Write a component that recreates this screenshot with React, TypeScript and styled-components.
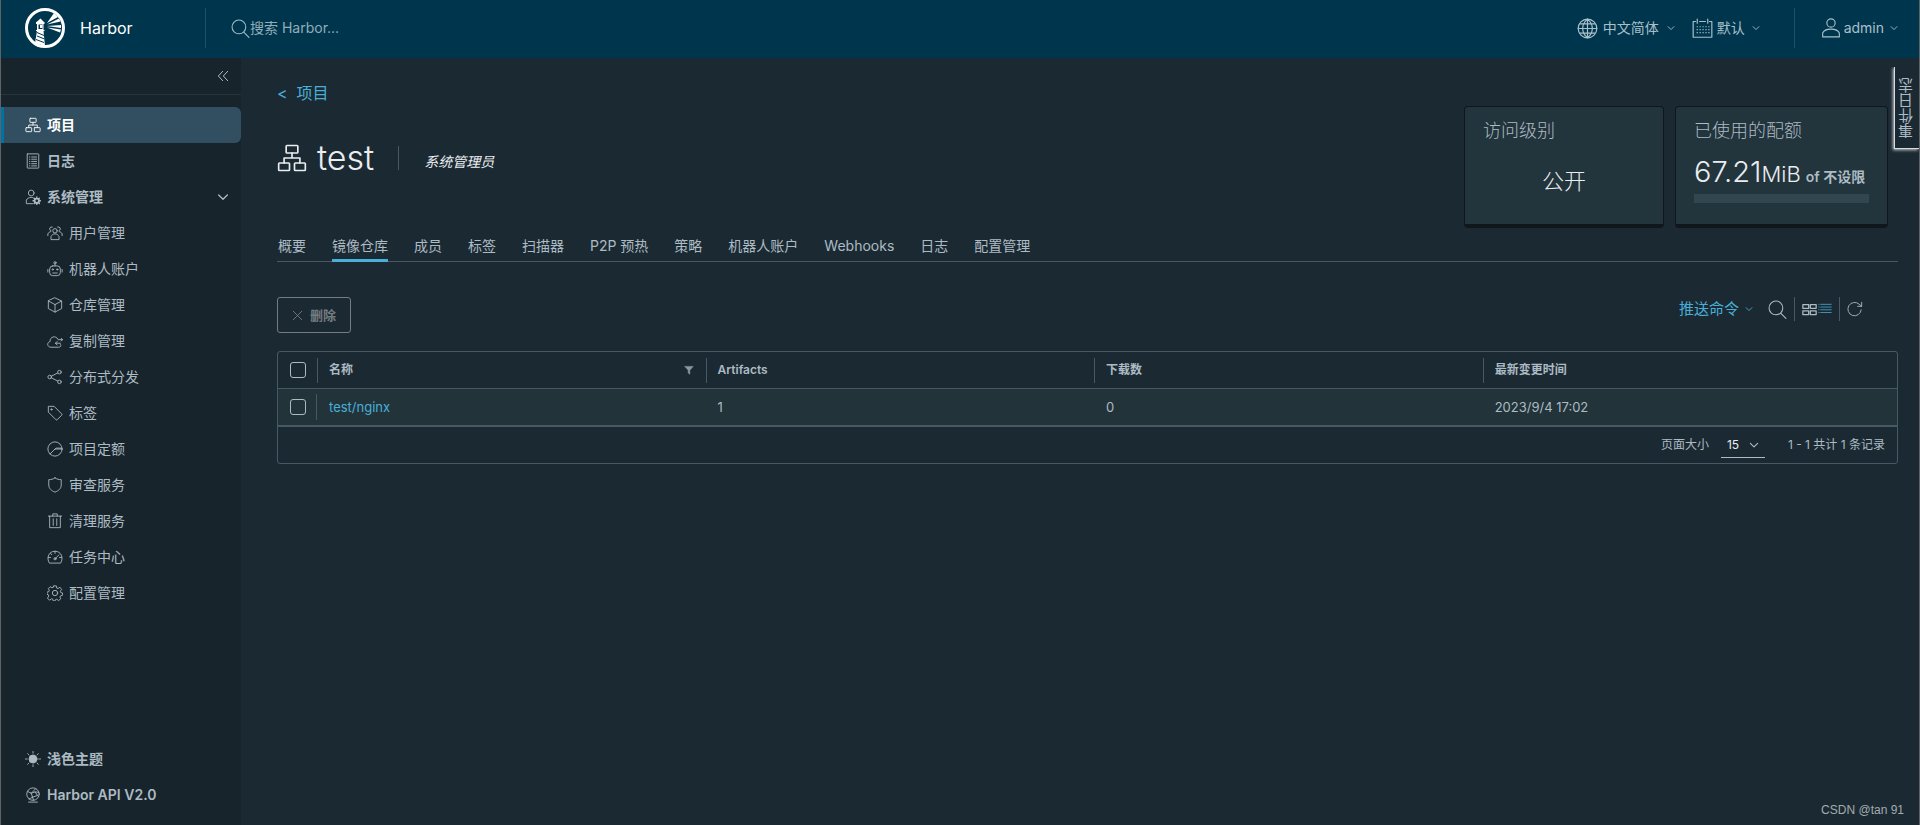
import React from "react";
import styled, { createGlobalStyle, css } from "styled-components";

const c = {
  header: "#00364d",
  side: "#17242b",
  main: "#1b2a32",
  active: "#324f62",
  panel: "#22343c",
  line: "#495865",
  text: "#adbbc4",
  bright: "#eaedf0",
  link: "#49afd9",
  edge: "#5c6265",
};

const Global = createGlobalStyle`
  *, *::before, *::after { box-sizing: border-box; }
  body {
    margin: 0;
    background: ${c.main};
    color: ${c.text};
    font: 400 14px/24px Inter, "Noto Sans CJK SC", sans-serif;
  }
  button, input, select { font: inherit; color: inherit; }
  button { background: none; border: 0; padding: 0; cursor: pointer; }
  a { color: inherit; text-decoration: none; }
`;

/* ---------- icons, all on a 36 unit grid ---------- */

const Svg = styled.svg<{ $s: number; $w?: number }>`
  display: block;
  flex: none;
  width: ${(p) => p.$s}px;
  height: ${(p) => p.$s}px;
  fill: none;
  stroke: currentColor;
  stroke-width: ${(p) => p.$w ?? 2};
  stroke-linecap: round;
  stroke-linejoin: round;
`;

const shapes: Record<string, React.ReactNode> = {
  org: (
    <>
      <rect x="11" y="3" width="14" height="9" rx="1" />
      <rect x="2" y="24" width="13" height="9" rx="1" />
      <rect x="21" y="24" width="13" height="9" rx="1" />
      <path d="M18 12v6M8.500 24v-6h19v6" />
    </>
  ),
  log: (
    <>
      <rect x="5" y="2" width="26" height="32" rx="1" />
      <path d="M10 9h1M15 9h11M10 14h1M15 14h11M10 19h1M15 19h11M10 24h1M15 24h11M10 29h1M15 29h11" />
    </>
  ),
  admin: (
    <>
      <circle cx="14" cy="9" r="6.500" />
      <path d="M17 33H3v-8c2-4 6-6 11-6 2 0 4 0 5 1" />
      <circle cx="26.500" cy="26.500" r="5" strokeWidth="4" />
      <path d="M26.500 18v3M26.500 32v3M18 26.500h3M32 26.500h3M20.500 20.500l2 2M30.500 30.500l2 2M32.500 20.500l-2 2M22.500 30.500l-2 2" strokeWidth="3" />
    </>
  ),
  users: (
    <>
      <circle cx="18" cy="13" r="5" />
      <path d="M9 32v-6c2-4 5-6 9-6s7 2 9 6v6zM12 4.500A4.500 4.500 0 1 0 9 13M24 4.500A4.500 4.500 0 1 1 27 13M2 24v-4c1-3 3-4 6-5M34 24v-4c-1-3-3-4-6-5" />
    </>
  ),
  robot: (
    <>
      <rect x="6" y="11" width="24" height="22" rx="7" />
      <circle cx="18" cy="4" r="2.500" />
      <path d="M18 7v4M2 19v6M34 19v6M13 27h10" />
      <circle cx="13" cy="19" r="1.500" />
      <circle cx="23" cy="19" r="1.500" />
    </>
  ),
  cube: <path d="M18 2l15 7v17l-15 8-15-8V9zM3 9l15 8 15-8M18 17v17" />,
  cloud: (
    <path d="M30 25c3 3 1 7-4 7H9C0 32-1 21 7 19 6 8 20 5 24 13M25 15h10M32 12l3 3-3 3M30 23H19M23 19l-4 4 4 4" />
  ),
  share: (
    <>
      <circle cx="6" cy="18" r="4" />
      <circle cx="28" cy="7" r="4" />
      <circle cx="28" cy="29" r="4" />
      <path d="M10 16l14-7M10 20l14 7" />
    </>
  ),
  tag: (
    <>
      <path d="M3 4v12l17 17c1 1 2 1 3 0l10-10c1-1 1-2 0-3L16 3H4z" />
      <circle cx="10" cy="10" r="1.500" />
    </>
  ),
  quota: (
    <>
      <circle cx="18" cy="18" r="16" />
      <path d="M7 29l11-11h16M18 18l3-2h12" />
    </>
  ),
  shield: <path d="M18 2c4 3 9 4 14 4v12c0 8-6 13-14 16C10 31 4 26 4 18V6c5 0 10-1 14-4z" />,
  trash: <path d="M3 7h30M13 7V2h10v5M6 7v26h24V7M14 13v15M22 13v15" />,
  gauge: (
    <>
      <path d="M5 31C-2 20 4 5 18 5s20 15 13 26zM18 5v5M3 19h5M28 19h5M8 10l3 3M18 22l9-9" />
      <circle cx="18" cy="22" r="2.500" />
    </>
  ),
  gear: (
    <>
      <circle cx="18" cy="18" r="6" />
      <path d="M15 2h6l1 5 3 1 4-3 4 5-3 4 1 3 4 1v5l-4 1-2 3 2 4-5 4-4-3-3 1-1 3h-4l-1-4-3-1-4 3-5-4 3-5-1-3-3-1v-5l4-1 1-3-2-4 4-4 4 2 3-1z" />
    </>
  ),
  sun: (
    <>
      <circle cx="18" cy="18" r="9" fill="currentColor" />
      <path d="M18 1v4M18 31v4M1 18h4M31 18h4M6 6l3 3M27 27l3 3M30 6l-3 3M9 27l-3 3" />
    </>
  ),
  api: (
    <>
      <circle cx="18" cy="16" r="14" />
      <path d="M8 34h20M6 10l8 4 10-10M14 14l3 9-8 4M17 23l11-4-5-8M28 19l3 3M14 14l9-3 8 1M17 23l2 6" />
    </>
  ),
  search: (
    <>
      <circle cx="15" cy="15" r="13" />
      <path d="M24 25l10 10" />
    </>
  ),
  globe: (
    <>
      <circle cx="18" cy="18" r="16" />
      <path d="M18 2v32M2 18h32M5 10h26M5 26h26M18 2c-11 9-11 23 0 32M18 2c11 9 11 23 0 32" />
    </>
  ),
  calendar: (
    <>
      <path d="M6 6H2v27h32V6h-4M13 6h10M9 2v7M27 2v7" />
      <path d="M8 15h2M13 15h2M18 15h2M23 15h2M28 15h2M8 20h2M13 20h2M18 20h2M23 20h2M28 20h2M8 25h2M13 25h2M18 25h2M23 25h2M28 25h2" strokeLinecap="butt" />
    </>
  ),
  user: (
    <>
      <circle cx="18" cy="9" r="7.500" />
      <path d="M3 34v-7c2-5 9-7 15-7s13 2 15 7v7z" />
    </>
  ),
  down: <path d="M5 12l13 13 13-13" />,
  collapse: <path d="M17 4L4 18l13 14M32 4L19 18l13 14" />,
  close: <path d="M4 4l28 28M32 4L4 32" />,
  filter: <path d="M3 5h30L21 19v14l-6-4V19z" fill="currentColor" />,
  cards: <path d="M2 6h14v9H2zM20 6h14v9H20zM2 21h14v9H2zM20 21h14v9H20z" />,
  list: <path d="M2 6h1M7 6h27M2 13h1M7 13h27M2 20h1M7 20h27M2 27h1M7 27h27" />,
  refresh: <path d="M32 20A15 15 0 1 1 27 7l6 5M33 3v9h-9" />,
};

function Icon({ name, size, w }: { name: string; size: number; w?: number }) {
  return (
    <Svg viewBox="0 0 36 36" $s={size} $w={w} aria-hidden="true">
      {shapes[name]}
    </Svg>
  );
}

function Logo() {
  return (
    <svg width="40" height="40" viewBox="0 0 40 40" aria-hidden="true">
      <circle cx="20" cy="20" r="18.500" fill="none" stroke="#fff" strokeWidth="3" />
      <path d="M15.500 10.500l3.500 3.500h.5v2h-1v6h1v1h-1l1.500 15-10-3 2-12h-1v-1h1v-6h-1v-2h.5z" fill="#fff" />
      <path d="M13.500 16.500h4v4.500h-4z" fill={c.header} />
      <path d="M15 17h2.500v3H15z" fill="#fff" />
      <path d="M12 24.500l7 3M12 28l7.500 3M11 31.500l8 3" stroke={c.header} strokeWidth="1" />
      <path d="M22 15l7-10 4 4zM22 16.500l12-6 1.500 3zM22 18l14-1v3zM22 19.500l14 2-1 3z" fill="#fff" />
    </svg>
  );
}

/* ---------- frame ---------- */

const Frame = styled.div`
  position: relative;
  display: flex;
  flex-direction: column;
  min-height: 100vh;
  border: solid ${c.edge};
  border-width: 0 1px;
`;

const Header = styled.header`
  display: flex;
  align-items: center;
  height: 58px;
  padding: 0 21px 2px 24px;
  background: ${c.header};
`;

const Brand = styled.a`
  display: flex;
  align-items: center;
  gap: 15px;
  width: 180px;
  color: #fff;
  font-size: 16px;
`;

const Rule = styled.span<{ $h: number }>`
  flex: none;
  width: 1px;
  height: ${(p) => p.$h}px;
  background: ${c.line};
`;

const HeaderRule = styled(Rule)`
  background: #1f5066;
`;

const Search = styled.label`
  display: flex;
  flex: 1;
  align-items: center;
  padding-left: 25px;
  color: #a3bcc8;
`;

const SearchInput = styled.input`
  flex: 1;
  min-width: 0;
  padding: 0;
  border: 0;
  outline: 0;
  background: none;
  &::placeholder { color: #93adb9; opacity: 1; }
`;

const MenuButton = styled.button<{ $gap: number }>`
  display: flex;
  align-items: center;
  gap: ${(p) => p.$gap}px;
  color: #a9c0cb;
  svg:last-child { margin-left: 3px; }
`;

const HeaderMenus = styled.div`
  display: flex;
  align-items: center;
  gap: 17px;
  margin-right: 34px;
`;

const UserMenu = styled.div`
  padding-left: 26px;
`;

const Body = styled.div`
  display: flex;
  flex: 1;
`;

/* ---------- side navigation ---------- */

const Side = styled.aside`
  display: flex;
  flex: none;
  flex-direction: column;
  width: 240px;
  padding-bottom: 12px;
  background: ${c.side};
`;

const CollapseRow = styled.div`
  display: flex;
  align-items: center;
  justify-content: flex-end;
  height: 37px;
  padding-right: 12px;
  border-bottom: 1px solid #25343d;
`;

const NavList = styled.nav`
  display: flex;
  flex: 1;
  flex-direction: column;
  padding-top: 12px;
`;

const NavItem = styled.a<{ $active?: boolean; $sub?: boolean }>`
  display: flex;
  align-items: center;
  gap: 6px;
  height: 36px;
  padding: 0 12px 0 ${(p) => (p.$sub ? 46 : 24)}px;
  font-weight: ${(p) => (p.$sub ? 400 : 600)};
  ${(p) =>
    p.$active &&
    css`
      border-radius: 0 6px 6px 0;
      background: ${c.active};
      box-shadow: inset 3px 0 #0072a3;
      color: #fff;
    `}
`;

const Grow = styled.span`
  flex: 1;
`;

const subItems = [
  ["users", "用户管理"],
  ["robot", "机器人账户"],
  ["cube", "仓库管理"],
  ["cloud", "复制管理"],
  ["share", "分布式分发"],
  ["tag", "标签"],
  ["quota", "项目定额"],
  ["shield", "审查服务"],
  ["trash", "清理服务"],
  ["gauge", "任务中心"],
  ["gear", "配置管理"],
];

/* ---------- main ---------- */

const Main = styled.main`
  flex: 1;
  min-width: 0;
  padding: 23px 21px 40px 36px;
`;

const Top = styled.div`
  display: flex;
  justify-content: space-between;
  align-items: flex-start;
`;

const Crumb = styled.a`
  display: flex;
  gap: 9px;
  color: ${c.link};
  font-size: 16px;
`;

const TitleRow = styled.div`
  display: flex;
  align-items: center;
  margin-top: 33px;
  color: ${c.bright};
`;

const Title = styled.h1`
  margin: 0 24px 0 10px;
  font-size: 34px;
  font-weight: 300;
  line-height: 40px;
`;

const Role = styled.em`
  padding: 7px 0 0 25px;
`;

const Cards = styled.div`
  display: flex;
  gap: 11px;
  margin: 25px 10px 0 0;
`;

const Card = styled.section<{ $w: number }>`
  width: ${(p) => p.$w}px;
  height: 122px;
  padding: 12px 18px;
  border: 1px solid #0f171c;
  border-bottom-width: 4px;
  border-radius: 4px;
  background: ${c.panel};
`;

const CardTitle = styled.h2`
  margin: 0;
  font-size: 18px;
  font-weight: 300;
`;

const Access = styled.p`
  margin: 22px 0 0;
  color: ${c.bright};
  font-size: 22px;
  font-weight: 300;
  line-height: 32px;
  text-align: center;
`;

const Quota = styled.p`
  display: flex;
  align-items: baseline;
  margin: 12px 0 0;
  color: ${c.bright};
  font-size: 29px;
  font-weight: 300;
  line-height: 34px;
  white-space: nowrap;
`;

const Unit = styled.span`
  font-size: 22px;
`;

const Limit = styled.span`
  margin-left: 5px;
  color: ${c.text};
  font-size: 14px;
  font-weight: 600;
`;

const Bar = styled.div`
  height: 9px;
  background: #324650;
`;

const Tabs = styled.nav`
  display: flex;
  gap: 26px;
  height: 32px;
  margin-top: 2px;
  padding-left: 1px;
  box-shadow: inset 0 -1px ${c.line};
`;

const Tab = styled.a<{ $active?: boolean }>`
  line-height: 32px;
  ${(p) => p.$active && css`box-shadow: inset 0 -3px ${c.link};`}
`;

const Toolbar = styled.div`
  display: flex;
  align-items: flex-start;
  justify-content: space-between;
  margin-top: 35px;
`;

const DeleteButton = styled.button`
  display: flex;
  align-items: center;
  justify-content: center;
  gap: 7px;
  width: 74px;
  height: 36px;
  border: 1px solid #737c81;
  border-radius: 3px;
  color: #737c81;
  font-size: 13px;
  font-weight: 600;
`;

const Tools = styled.div`
  display: flex;
  align-items: center;
  gap: 7px;
  height: 24px;
  padding-right: 35px;
`;

const PushButton = styled.button`
  display: flex;
  align-items: center;
  gap: 6px;
  margin-right: 8px;
  color: ${c.link};
  font-size: 15px;
`;

const IconButton = styled.button<{ $on?: boolean }>`
  color: ${(p) => (p.$on ? c.link : c.text)};
`;

const ViewSwitch = styled.div`
  display: flex;
  align-items: center;
  gap: 1px;
`;

const Grid = styled.div`
  margin-top: 18px;
  border: 1px solid ${c.line};
  border-radius: 3px;
`;

const Table = styled.table`
  width: 100%;
  table-layout: fixed;
  border-spacing: 0;
  text-align: left;
`;

const Th = styled.th<{ $w?: string }>`
  width: ${(p) => p.$w ?? "auto"};
  height: 37px;
  padding: 0;
  border-bottom: 1px solid ${c.line};
  font-size: 12px;
  font-weight: 600;
`;

const HeadCell = styled.div`
  display: flex;
  align-items: center;
  justify-content: space-between;
  height: 25px;
  padding: 0 12px 0 11px;
  border-left: 1px solid ${c.line};
  color: ${c.text};
`;

const FilterButton = styled.button`
  color: #8d979d;
`;

const Td = styled.td`
  height: 36px;
  padding: 0 12px;
  background: #22343a;
  font-size: 13px;
`;

const CheckCell = styled(Td)`
  padding: 0;
`;

const CheckBox = styled.label<{ $rule?: boolean }>`
  display: flex;
  align-items: center;
  height: 26px;
  padding-left: 12px;
  border-right: ${(p) => (p.$rule ? 1 : 0)}px solid ${c.line};
`;

const Check = styled.input`
  appearance: none;
  width: 16px;
  height: 16px;
  margin: 0;
  border: 1px solid ${c.text};
  border-radius: 3px;
`;

const RepoLink = styled.a`
  color: ${c.link};
`;

const Footer = styled.div`
  display: flex;
  align-items: center;
  justify-content: flex-end;
  height: 38px;
  padding-right: 12px;
  border-top: 2px solid ${c.line};
  font-size: 12px;
`;

const PageSize = styled.label`
  display: flex;
  align-items: center;
  gap: 12px;
  margin-right: 23px;
`;

const SelectBox = styled.span`
  display: flex;
  align-items: center;
  width: 44px;
  padding: 0 6px 0 6px;
  border-bottom: 1px solid ${c.text};
`;

const Select = styled.select`
  appearance: none;
  flex: 1;
  min-width: 0;
  padding: 0;
  border: 0;
  background: none;
  color: ${c.bright};
`;

const EventTab = styled.button`
  position: absolute;
  top: 67px;
  right: 0;
  width: 25px;
  height: 82px;
  border: solid #d8dcde;
  border-width: 0 0 1px 1px;
  background: ${c.main};
  box-shadow: -1px 1px 3px #c8cccf;
  font-size: 15px;
  clip-path: inset(0 0 -5px -5px);
`;

const EventText = styled.span`
  display: block;
  writing-mode: vertical-rl;
  transform: rotate(180deg);
  text-align: center;
`;

const Watermark = styled.small`
  position: absolute;
  right: 15px;
  bottom: 6px;
  color: #a4abaf;
  font-family: "Liberation Sans", sans-serif;
  font-size: 12px;
  line-height: 18px;
`;

const tabs = ["概要", "镜像仓库", "成员", "标签", "扫描器", "P2P 预热", "策略", "机器人账户", "Webhooks", "日志", "配置管理"];

export default function App() {
  return (
    <>
      <Global />
      <Frame>
        <Header>
          <Brand href="#">
            <Logo />
            Harbor
          </Brand>
          <HeaderRule $h={40} />
          <Search>
            <Icon name="search" size={19} />
            <SearchInput aria-label="搜索" placeholder="搜索 Harbor..." />
          </Search>
          <HeaderMenus>
            <MenuButton $gap={5}>
              <Icon name="globe" size={21} />
              中文简体
              <Icon name="down" size={8} w={4} />
            </MenuButton>
            <MenuButton $gap={4}>
              <Icon name="calendar" size={21} />
              默认
              <Icon name="down" size={8} w={4} />
            </MenuButton>
          </HeaderMenus>
          <HeaderRule $h={40} />
          <UserMenu>
            <MenuButton $gap={3}>
              <Icon name="user" size={20} />
              admin
              <Icon name="down" size={8} w={4} />
            </MenuButton>
          </UserMenu>
        </Header>
        <Body>
          <Side>
            <CollapseRow>
              <button aria-label="收起">
                <Icon name="collapse" size={12} w={3} />
              </button>
            </CollapseRow>
            <NavList>
              <NavItem href="#" $active>
                <Icon name="org" size={16} />
                项目
              </NavItem>
              <NavItem href="#">
                <Icon name="log" size={16} />
                日志
              </NavItem>
              <NavItem href="#">
                <Icon name="admin" size={16} />
                系统管理
                <Grow />
                <Icon name="down" size={12} w={4} />
              </NavItem>
              {subItems.map(([icon, label]) => (
                <NavItem href="#" $sub key={label}>
                  <Icon name={icon} size={16} />
                  {label}
                </NavItem>
              ))}
            </NavList>
            <NavItem href="#">
              <Icon name="sun" size={16} />
              浅色主题
            </NavItem>
            <NavItem href="#">
              <Icon name="api" size={16} />
              Harbor API V2.0
            </NavItem>
          </Side>
          <Main>
            <Top>
              <div>
                <Crumb href="#">
                  <span>&lt;</span>
                  <span>项目</span>
                </Crumb>
                <TitleRow>
                  <Icon name="org" size={30} />
                  <Title>test</Title>
                  <Rule $h={24} />
                  <Role>系统管理员</Role>
                </TitleRow>
              </div>
              <Cards>
                <Card $w={200}>
                  <CardTitle>访问级别</CardTitle>
                  <Access>公开</Access>
                </Card>
                <Card $w={213}>
                  <CardTitle>已使用的配额</CardTitle>
                  <Quota>
                    67.21<Unit>MiB</Unit>
                    <Limit>of 不设限</Limit>
                  </Quota>
                  <Bar />
                </Card>
              </Cards>
            </Top>
            <Tabs>
              {tabs.map((t) => (
                <Tab href="#" key={t} $active={t === "镜像仓库"}>
                  {t}
                </Tab>
              ))}
            </Tabs>
            <Toolbar>
              <DeleteButton disabled>
                <Icon name="close" size={11} w={3} />
                删除
              </DeleteButton>
              <Tools>
                <PushButton>
                  推送命令
                  <Icon name="down" size={8} w={4} />
                </PushButton>
                <IconButton aria-label="搜索">
                  <Icon name="search" size={19} />
                </IconButton>
                <Rule $h={24} />
                <ViewSwitch>
                  <IconButton aria-label="卡片视图">
                    <Icon name="cards" size={15} w={3} />
                  </IconButton>
                  <IconButton aria-label="列表视图" $on>
                    <Icon name="list" size={14} />
                  </IconButton>
                </ViewSwitch>
                <Rule $h={24} />
                <IconButton aria-label="刷新">
                  <Icon name="refresh" size={16} />
                </IconButton>
              </Tools>
            </Toolbar>
            <Grid>
              <Table>
                <thead>
                  <tr>
                    <Th $w="39px">
                      <CheckBox>
                        <Check type="checkbox" aria-label="全选" />
                      </CheckBox>
                    </Th>
                    <Th $w="24%">
                      <HeadCell>
                        名称
                        <FilterButton aria-label="筛选">
                          <Icon name="filter" size={10} />
                        </FilterButton>
                      </HeadCell>
                    </Th>
                    <Th $w="24%">
                      <HeadCell>Artifacts</HeadCell>
                    </Th>
                    <Th $w="24%">
                      <HeadCell>下载数</HeadCell>
                    </Th>
                    <Th>
                      <HeadCell>最新变更时间</HeadCell>
                    </Th>
                  </tr>
                </thead>
                <tbody>
                  <tr>
                    <CheckCell>
                      <CheckBox $rule>
                        <Check type="checkbox" aria-label="选择 test/nginx" />
                      </CheckBox>
                    </CheckCell>
                    <Td>
                      <RepoLink href="#">test/nginx</RepoLink>
                    </Td>
                    <Td>1</Td>
                    <Td>0</Td>
                    <Td>2023/9/4 17:02</Td>
                  </tr>
                </tbody>
              </Table>
              <Footer>
                <PageSize>
                  页面大小
                  <SelectBox>
                    <Select defaultValue="15">
                      <option>15</option>
                      <option>25</option>
                      <option>50</option>
                    </Select>
                    <Icon name="down" size={10} w={4} />
                  </SelectBox>
                </PageSize>
                <span>1 - 1 共计 1 条记录</span>
              </Footer>
            </Grid>
          </Main>
        </Body>
        <EventTab>
          <EventText>事件日志</EventText>
        </EventTab>
        <Watermark>CSDN @tan 91</Watermark>
      </Frame>
    </>
  );
}
